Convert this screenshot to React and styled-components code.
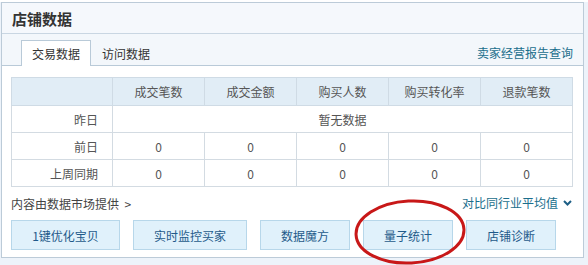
import React from 'react'
import styled, { createGlobalStyle } from 'styled-components'

const GlobalStyle = createGlobalStyle`
  html, body {
    margin: 0;
    padding: 0;
    background: #edf3fa;
    font-family: "Noto Sans CJK SC", "Noto Sans", sans-serif;
    font-size: 12px;
    color: #444;
  }
`

const Page = styled.div`
  position: relative;
  width: 588px;
  height: 265px;
  padding: 2px 0 0 1px;
  box-sizing: border-box;
  background: linear-gradient(#fff 0, #fff 2px, #edf3fa 2px);
`

const Panel = styled.div`
  width: 583px;
  height: 256px;
  box-sizing: border-box;
  border: 1px solid #bccbd8;
  background: #fff;
  display: flex;
  flex-direction: column;
`

const Header = styled.div`
  height: 30px;
  display: flex;
  align-items: center;
  padding-left: 10px;
  background: #f5f8fc;
  border-bottom: 1px solid #c9d6e2;
  font-size: 15px;
  font-weight: bold;
  color: #333;
`

const TabBar = styled.div`
  height: 31px;
  display: flex;
  align-items: flex-end;
  padding: 0 10px 0 19px;
  background: #f3f7fb;
  border-bottom: 1px solid #b9cad8;
`

const Tab = styled.div`
  height: 25px;
  width: ${p => p.$active ? '68px' : 'auto'};
  padding: ${p => p.$active ? '0' : '0 10px'};
  margin-bottom: -1px;
  display: flex;
  align-items: center;
  justify-content: center;
  font-size: 12px;
  color: #333;
  background: ${p => p.$active ? '#fff' : 'transparent'};
  border: 1px solid ${p => p.$active ? '#b9cad8' : 'transparent'};
  border-bottom: none;
`

const TabLink = styled.a`
  margin-left: auto;
  align-self: center;
  margin-top: 6px;
  color: #1a6e8c;
  text-decoration: none;
  font-size: 12px;
`

const Body = styled.div`
  flex: 1;
  padding: 11px 10px 0 9px;
`

const Table = styled.table`
  width: 561px;
  border-collapse: collapse;
  table-layout: fixed;
  color: #555;
`

const Th = styled.th`
  height: 25px;
  font-weight: normal;
  background: #e1edf6;
  border: 1px solid #cfdbe5;
  color: #555;
  text-align: center;
`

const Td = styled.td`
  height: 26px;
  border: 1px solid #d3dbe2;
  text-align: ${p => p.$label ? 'right' : 'center'};
  padding: ${p => p.$label ? '0 14px 0 0' : '0'};
`

const InfoRow = styled.div`
  height: 33px;
  display: flex;
  align-items: center;
  justify-content: space-between;
  padding-right: 1px;
`

const Source = styled.span`
  color: #444;
`

const Compare = styled.a`
  display: flex;
  align-items: center;
  gap: 5px;
  color: #1a6e8c;
  text-decoration: none;
  margin-top: -2px;
`

const ButtonRow = styled.div`
  display: flex;
  gap: 13px;
`

const ActionButton = styled.button`
  width: ${p => p.$w}px;
  height: 30px;
  padding: 0;
  box-sizing: border-box;
  border: 1px solid #b7d7ea;
  background: #e0f1fb;
  color: #1f5a8a;
  font-family: inherit;
  font-size: 12px;
  cursor: pointer;
`

const Circle = styled.svg`
  position: absolute;
  left: 352px;
  top: 196px;
  pointer-events: none;
`

const cols = ['成交笔数', '成交金额', '购买人数', '购买转化率', '退款笔数']
const widths = [101, 92, 92, 92, 92, 92]
const buttons = [
  ['1键优化宝贝', 109],
  ['实时监控买家', 114],
  ['数据魔方', 90],
  ['量子统计', 90],
  ['店铺诊断', 90],
]

export default function App() {
  return (
    <Page>
      <GlobalStyle />
      <Panel>
        <Header>店铺数据</Header>
        <TabBar>
          <Tab $active>交易数据</Tab>
          <Tab>访问数据</Tab>
          <TabLink href="#">卖家经营报告查询</TabLink>
        </TabBar>
        <Body>
          <Table>
            <colgroup>
              {widths.map((w, i) => <col key={i} style={{ width: w }} />)}
            </colgroup>
            <thead>
              <tr>
                <Th />
                {cols.map(c => <Th key={c}>{c}</Th>)}
              </tr>
            </thead>
            <tbody>
              <tr>
                <Td $label>昨日</Td>
                <Td colSpan={5}>暂无数据</Td>
              </tr>
              {['前日', '上周同期'].map(r => (
                <tr key={r}>
                  <Td $label>{r}</Td>
                  {cols.map(c => <Td key={c}>0</Td>)}
                </tr>
              ))}
            </tbody>
          </Table>
          <InfoRow>
            <Source>内容由数据市场提供&nbsp;&nbsp;&gt;</Source>
            <Compare href="#">
              对比同行业平均值
              <svg width="9" height="6" viewBox="0 0 9 6">
                <path d="M1 1 L4.5 4.5 L8 1" fill="none" stroke="#1e5f86" strokeWidth="2" />
              </svg>
            </Compare>
          </InfoRow>
          <ButtonRow>
            {buttons.map(([t, w]) => (
              <ActionButton key={t} $w={w}>{t}</ActionButton>
            ))}
          </ButtonRow>
        </Body>
      </Panel>
      <Circle width="118" height="70" viewBox="0 0 118 70">
        <ellipse cx="58" cy="36" rx="54" ry="31" fill="none" stroke="#c81818" strokeWidth="3" transform="rotate(-3 58 36)" />
      </Circle>
    </Page>
  )
}
